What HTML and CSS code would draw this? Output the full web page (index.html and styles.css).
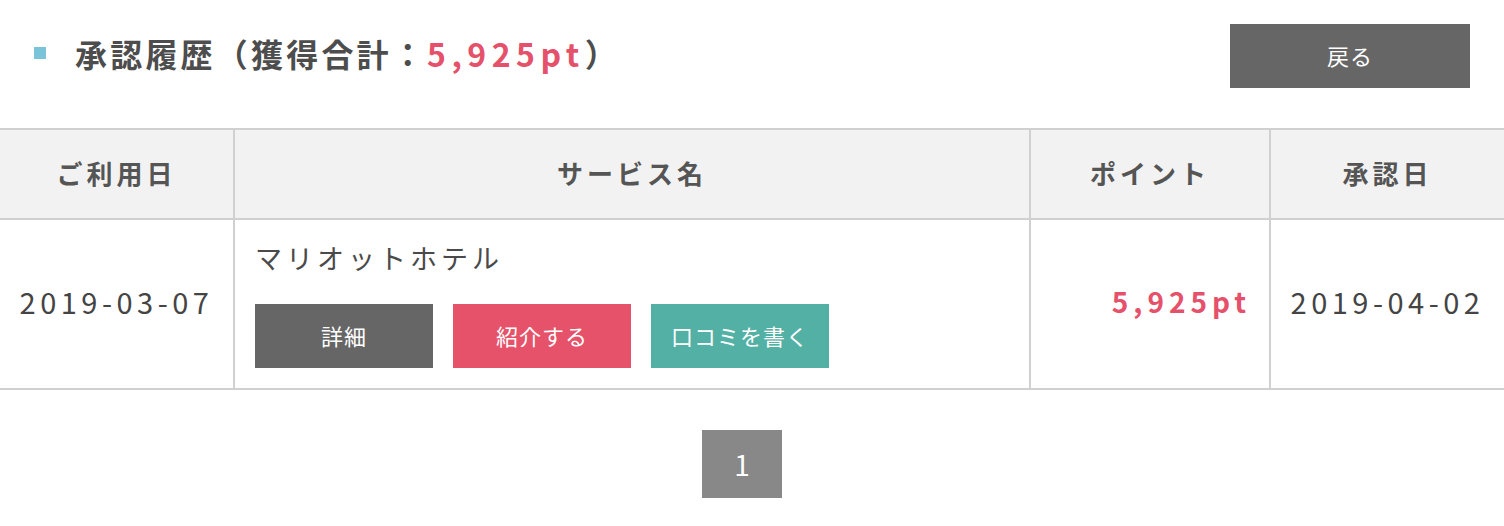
FILE: index.html
```html
<!DOCTYPE html>
<html lang="ja">

<head>
    <meta charset="UTF-8">
    <meta name="viewport" content="width=device-width, initial-scale=1.0">
    <title>承認履歴</title>
    <link rel="stylesheet" href="styles.css">
</head>

<body>
    <div class="page">
        <div class="page-head">
            <h2 class="title">承認履歴（獲得合計：<span class="pt">5,925pt</span>）</h2>
            <a href="#" class="btn btn-gray back">戻る</a>
        </div>

        <table class="history">
            <tr>
                <th class="col-date">ご利用日</th>
                <th class="col-service">サービス名</th>
                <th class="col-point">ポイント</th>
                <th class="col-approve">承認日</th>
            </tr>
            <tr>
                <td class="date">2019-03-07</td>
                <td class="service">
                    <div class="service-name">マリオットホテル</div>
                    <div class="actions">
                        <a href="#" class="btn btn-gray">詳細</a>
                        <a href="#" class="btn btn-red">紹介する</a>
                        <a href="#" class="btn btn-green">口コミを書く</a>
                    </div>
                </td>
                <td class="point">5,925pt</td>
                <td class="date">2019-04-02</td>
            </tr>
        </table>

        <div class="pager">
            <span class="page-num">1</span>
        </div>
    </div>
</body>

</html>
```

FILE: styles.css
```css
body {
    margin: 0;
    background-color: #fff;
    color: #4a4a4a;
    font-family: "Noto Sans CJK JP", "Noto Sans", sans-serif;
    overflow: hidden;
}

.page-head {
    display: flex;
    align-items: flex-start;
    justify-content: space-between;
    padding: 24px 34px 0 34px;
    box-sizing: border-box;
    height: 128px;
}

.title {
    display: flex;
    align-items: center;
    height: 64px;
    margin: 0;
    margin-top: -3px;
    font-size: 32px;
    font-weight: bold;
    letter-spacing: 3.2px;
    color: #4d4d4d;
    line-height: 1;
}

.title::before {
    content: "";
    flex: none;
    width: 12px;
    height: 12px;
    background-color: #7bc3d9;
    margin-right: 29px;
}

.pt {
    color: #e5506a;
    letter-spacing: 5.5px;
}

.btn {
    display: inline-flex;
    align-items: center;
    justify-content: center;
    width: 178px;
    height: 64px;
    padding-bottom: 2px;
    box-sizing: border-box;
    color: #fff;
    font-size: 22px;
    letter-spacing: 1px;
    text-decoration: none;
}

.btn-gray {
    background-color: #666;
}

.btn-red {
    background-color: #e5526a;
}

.btn-green {
    background-color: #53b0a4;
}

.back {
    width: 240px;
}

/* table */
.history {
    width: 100%;
    border-collapse: collapse;
}

.history th,
.history td {
    border: 2px solid #d0d0d0;
}

.history tr > :first-child {
    border-left: none;
}

.history tr > :last-child {
    border-right: none;
}

.history th {
    height: 84px;
    background-color: #f2f2f2;
    font-size: 26px;
    letter-spacing: 4px;
    color: #555;
    font-weight: bold;
    padding: 0 0 4px;
}

.col-date {
    width: 233px;
}

.col-point {
    width: 238px;
}

.col-approve {
    width: 233px;
}

.history td {
    padding: 0 0 6px;
    font-size: 27px;
}

.date {
    text-align: center;
    font-size: 29px !important;
    letter-spacing: 4.5px;
    color: #444;
}

.service {
    padding: 20px !important;
}

.service-name {
    line-height: 36px;
    letter-spacing: 4px;
    margin-bottom: 28px;
    color: #4a4a4a;
}

.actions {
    display: flex;
    gap: 20px;
}

.point {
    text-align: right;
    padding-right: 18px !important;
    font-size: 28px !important;
    color: #e5506a;
    font-weight: bold;
    letter-spacing: 5px;
}

/* pager */
.pager {
    display: flex;
    justify-content: center;
    padding: 40px 20px 0 0;
}

.page-num {
    display: flex;
    align-items: center;
    justify-content: center;
    width: 80px;
    height: 68px;
    background-color: #888;
    color: #fff;
    font-size: 28px;
}
```
